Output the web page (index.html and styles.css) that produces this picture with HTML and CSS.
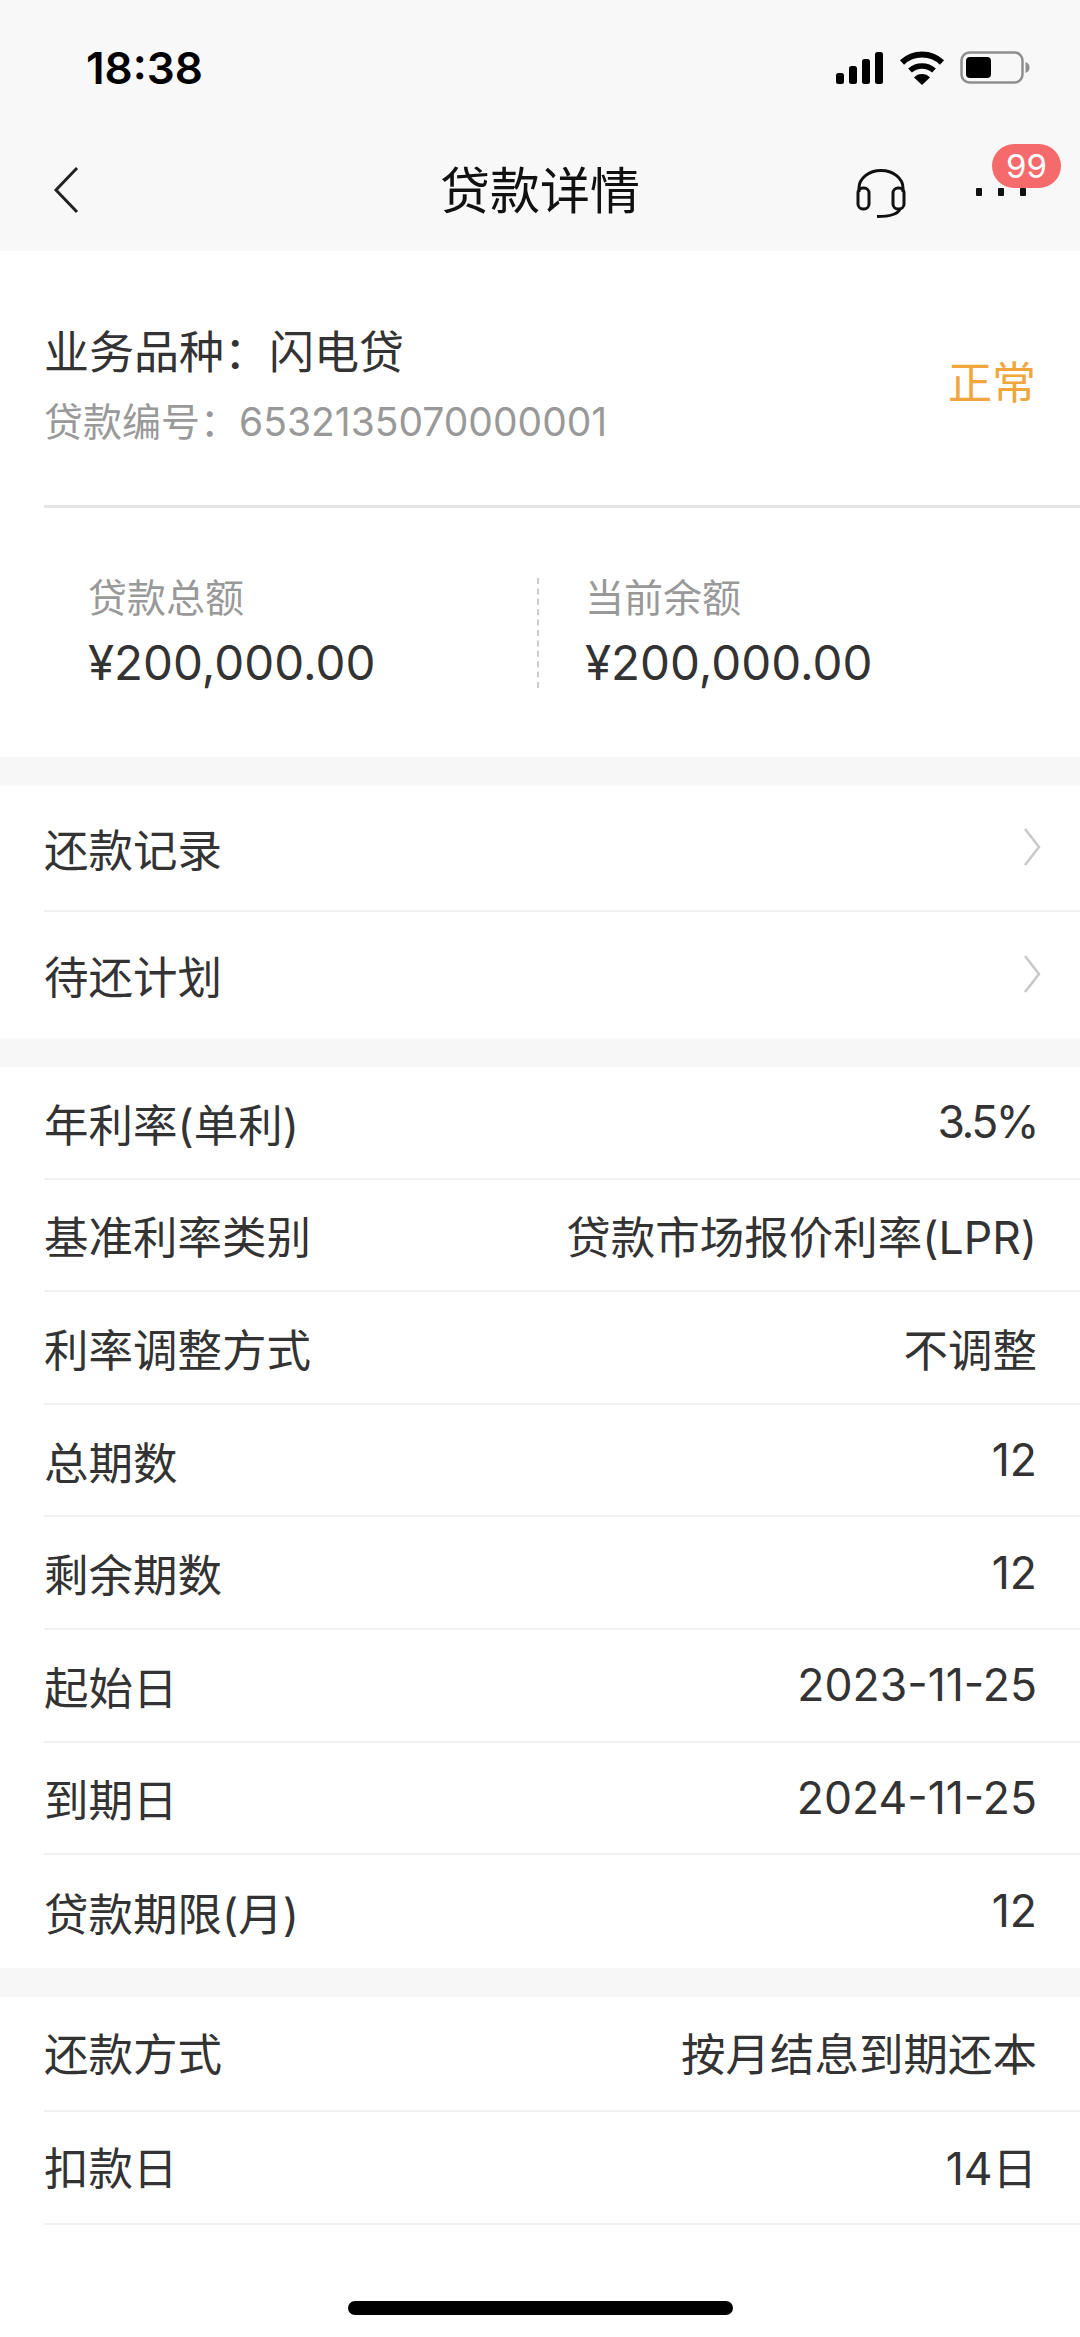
FILE: index.html
```html
<!DOCTYPE html>
<html lang="zh-CN">
<head>
    <meta charset="UTF-8">
    <meta name="viewport" content="width=device-width, initial-scale=1.0">
    <title>贷款详情</title>
    <link rel="stylesheet" href="styles.css">
</head>
<body>
    <header class="top">
        <div class="status-bar">
            <span class="time">18:38</span>
            <div class="status-icons">
                <svg class="ic-signal" width="48" height="32" viewBox="0 0 48 32">
                    <rect x="0" y="21" width="8" height="11" rx="2.5"/>
                    <rect x="13" y="14" width="8" height="18" rx="2.5"/>
                    <rect x="26" y="7" width="8" height="25" rx="2.5"/>
                    <rect x="39" y="0" width="8" height="32" rx="2.5"/>
                </svg>
                <svg class="ic-wifi" width="46" height="34" viewBox="0 0 46 34">
                    <path d="M3 11.5 A29 29 0 0 1 43 11.5" fill="none" stroke="#000" stroke-width="6"/>
                    <path d="M11 19.5 A18 18 0 0 1 35 19.5" fill="none" stroke="#000" stroke-width="5.5"/>
                    <path d="M23 34 L15 26.5 A11 11 0 0 1 31 26.5 Z"/>
                </svg>
                <svg class="ic-battery" width="70" height="34" viewBox="0 0 70 34">
                    <rect x="1.5" y="1.5" width="61" height="30" rx="8" fill="none" stroke="#8e8e8e" stroke-width="2.5"/>
                    <rect x="6" y="6" width="25" height="21" rx="4"/>
                    <path d="M65.5 11 C68.5 12 69.5 14 69.5 16.500 C69.500 19 68.500 21 65.5 22 Z" fill="#8e8e8e"/>
                </svg>
            </div>
        </div>
        <nav class="nav">
            <svg class="ic-back" width="26" height="48" viewBox="0 0 26 48">
                <path d="M24 2 L3 24 L24 46" fill="none" stroke="#222" stroke-width="3"/>
            </svg>
            <h1 class="nav-title">贷款详情</h1>
            <div class="nav-actions">
                <svg class="ic-service" width="50" height="50" viewBox="0 0 50 50">
                    <path d="M3 23 V19 A22 17.500 0 0 1 47 19 V23" fill="none" stroke="#111" stroke-width="3"/>
                    <rect x="2" y="19" width="11" height="21" rx="5" fill="none" stroke="#111" stroke-width="3"/>
                    <rect x="37" y="19" width="11" height="21" rx="5" fill="none" stroke="#111" stroke-width="3"/>
                    <path d="M44 40 C42 45 36 47.500 21 47.500" fill="none" stroke="#111" stroke-width="3"/>
                </svg>
                <div class="more">
                    <i></i><i></i><i></i>
                    <span class="badge">99</span>
                </div>
            </div>
        </nav>
    </header>

    <section class="summary">
        <div class="summary-head">
            <div class="summary-info">
                <div class="biz-name">业务品种：闪电贷</div>
                <div class="loan-no">贷款编号：<span class="num">6532135070000001</span></div>
            </div>
            <span class="state">正常</span>
        </div>
        <div class="amounts">
            <div class="amount">
                <div class="amount-label">贷款总额</div>
                <div class="amount-value">¥200,000.00</div>
            </div>
            <div class="amount amount-right">
                <div class="amount-label">当前余额</div>
                <div class="amount-value">¥200,000.00</div>
            </div>
        </div>
    </section>

    <section class="group group-links">
        <div class="row"><span>还款记录</span><svg class="ic-arrow" width="20" height="40" viewBox="0 0 20 40"><path d="M4 2 L18 20 L4 38" fill="none" stroke="#c8c8c8" stroke-width="2.500"/></svg></div>
        <div class="row"><span>待还计划</span><svg class="ic-arrow" width="20" height="40" viewBox="0 0 20 40"><path d="M4 2 L18 20 L4 38" fill="none" stroke="#c8c8c8" stroke-width="2.500"/></svg></div>
    </section>

    <section class="group">
        <div class="row"><span>年利率(单利)</span><span class="pct">3.5%</span></div>
        <div class="row"><span>基准利率类别</span><span>贷款市场报价利率(LPR)</span></div>
        <div class="row"><span>利率调整方式</span><span>不调整</span></div>
        <div class="row"><span>总期数</span><span>12</span></div>
        <div class="row"><span>剩余期数</span><span>12</span></div>
        <div class="row"><span>起始日</span><span>2023-11-25</span></div>
        <div class="row"><span>到期日</span><span>2024-11-25</span></div>
        <div class="row"><span>贷款期限(月)</span><span>12</span></div>
    </section>

    <section class="group group-last">
        <div class="row"><span>还款方式</span><span>按月结息到期还本</span></div>
        <div class="row"><span>扣款日</span><span>14日</span></div>
    </section>

    <div class="home-bar"></div>
</body>
</html>
```

FILE: styles.css
```css
* {
    box-sizing: border-box;
}
html, body {
    height: 100%;
}
body {
    margin: 0;
    display: flex;
    flex-direction: column;
    background-color: #f7f7f7;
    color: #333;
    font-family: Inter, "Noto Sans CJK SC", sans-serif;
    overflow: hidden;
}

/* top */
.top {
    height: 251px;
    background-color: #f8f8f8;
}
.status-bar {
    display: flex;
    justify-content: space-between;
    align-items: center;
    height: 136px;
    padding: 0 50px 0 86px;
}
.time {
    font-size: 44px;
    font-weight: 600;
    color: #000;
}
.status-icons {
    display: flex;
    align-items: center;
    gap: 15px;
}
.nav {
    position: relative;
    display: flex;
    justify-content: space-between;
    align-items: center;
    height: 115px;
    padding: 0 51px 0 53px;
    margin-top: -8px;
}
.ic-back {
    margin-top: 8px;
}
.nav-title {
    margin: 0;
    padding-top: 2px;
    position: absolute;
    left: 0;
    right: 0;
    text-align: center;
    font-size: 50px;
    font-weight: 400;
    color: #111;
}
.nav-actions {
    display: flex;
    align-items: center;
    gap: 70px;
    padding-top: 13px;
}
.ic-service {
    margin-top: 3px;
}
.more {
    position: relative;
    display: flex;
    gap: 16px;
    width: 50px;
    margin-right: 3px;
}
.more i {
    width: 6px;
    height: 8px;
    border-radius: 1px;
    background-color: #111;
}
.badge {
    position: absolute;
    left: 16px;
    top: -44px;
    width: 69px;
    height: 44px;
    border-radius: 22px;
    background-color: #f56b6b;
    color: #fff;
    font-size: 33px;
    line-height: 44px;
    text-align: center;
}

/* summary */
.summary {
    height: 506px;
    padding-left: 44px;
    background-color: #fff;
}
.summary-head {
    display: flex;
    justify-content: space-between;
    align-items: center;
    height: 257px;
    padding-right: 44px;
    border-bottom: 3px solid #e5e5e5;
}
.summary-info {
    padding-top: 13px;
}
.biz-name {
    font-size: 45px;
    line-height: 60px;
}
.loan-no {
    margin-top: 14px;
    font-size: 39px;
    line-height: 50px;
    color: #999;
}
.state {
    padding-top: 4px;
    font-size: 44px;
    color: #f0a63c;
}
.amounts {
    display: flex;
    padding-top: 70px;
}
.amount {
    width: 493px;
    padding-left: 44px;
}
.amount-right {
    width: auto;
    padding-left: 46px;
    border-left: 2px dashed #ccc;
}
.amount-label {
    font-size: 39px;
    line-height: 40px;
    color: #999;
}
.amount-value {
    margin-top: 20px;
    font-size: 47.500px;
    line-height: 50px;
}

/* list */
.group {
    margin-top: 29px;
    padding-left: 44px;
    background-color: #fff;
}
.group-links .row {
    height: 126px;
    padding-bottom: 2px;
}
.group-last {
    flex: 1;
}
.group-last .row {
    height: 113px;
    padding-bottom: 4px;
}
.group-last .row:first-child {
    height: 115px;
}
.row {
    display: flex;
    justify-content: space-between;
    align-items: center;
    height: 112.600px;
    padding-right: 43px;
    font-size: 44.500px;
    border-bottom: 2px solid #f1f1f1;
}
.pct {
    letter-spacing: -2.500px;
}
.group > .row:last-child {
    border-bottom: none;
}
.group-last > .row:last-child {
    border-bottom: 2px solid #f1f1f1;
}
.ic-arrow {
    margin-right: -4px;
}
.home-bar {
    position: absolute;
    left: 348px;
    top: 2301px;
    width: 385px;
    height: 14px;
    border-radius: 7px;
    background-color: #000;
}
```
